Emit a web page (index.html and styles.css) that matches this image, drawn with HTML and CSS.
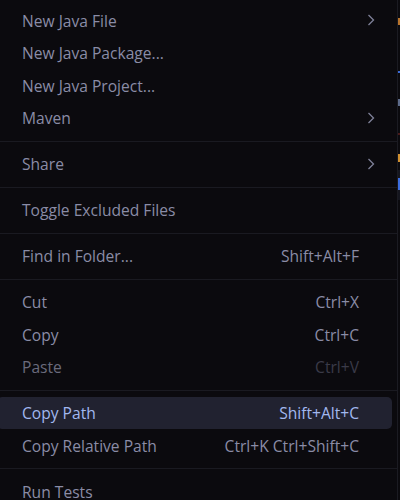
FILE: index.html
```html
<!DOCTYPE html>
<html>
<head>
<meta charset="utf-8">
<link rel="stylesheet" href="styles.css">
</head>
<body>
<div class="screen">
  <div class="menu">
    <div class="item"><span class="label">New Java File</span><svg class="chev" viewBox="0 0 8 12" width="8" height="12"><path d="M1.5 1 L6.5 6 L1.5 11" /></svg></div>
    <div class="item"><span class="label">New Java Package...</span></div>
    <div class="item"><span class="label">New Java Project...</span></div>
    <div class="item"><span class="label">Maven</span><svg class="chev" viewBox="0 0 8 12" width="8" height="12"><path d="M1.5 1 L6.5 6 L1.5 11" /></svg></div>
    <div class="sep"></div>
    <div class="item"><span class="label">Share</span><svg class="chev" viewBox="0 0 8 12" width="8" height="12"><path d="M1.5 1 L6.5 6 L1.5 11" /></svg></div>
    <div class="sep"></div>
    <div class="item"><span class="label">Toggle Excluded Files</span></div>
    <div class="sep"></div>
    <div class="item"><span class="label">Find in Folder...</span><span class="key">Shift+Alt+F</span></div>
    <div class="sep"></div>
    <div class="item"><span class="label">Cut</span><span class="key">Ctrl+X</span></div>
    <div class="item"><span class="label">Copy</span><span class="key">Ctrl+C</span></div>
    <div class="item disabled"><span class="label">Paste</span><span class="key">Ctrl+V</span></div>
    <div class="sep"></div>
    <div class="item active"><span class="label">Copy Path</span><span class="key">Shift+Alt+C</span></div>
    <div class="item"><span class="label">Copy Relative Path</span><span class="key">Ctrl+K Ctrl+Shift+C</span></div>
    <div class="sep"></div>
    <div class="item"><span class="label">Run Tests</span></div>
  </div>
  <div class="editor">
    <span class="mark m1"></span>
    <span class="mark m2"></span>
    <span class="mark m3"></span>
    <span class="mark m4"></span>
    <span class="mark m5"></span>
    <span class="mark m6"></span>
  </div>
</div>
</body>
</html>
```

FILE: styles.css
```css
html, body {
  margin: 0;
  padding: 0;
  background: #0b0a0e;
  overflow: hidden;
}
.screen {
  display: flex;
  width: 400px;
  height: 500px;
  overflow: hidden;
}
.menu {
  flex: 0 0 406px;
  margin-left: -8px;
  padding-top: 4.25px;
  border-right: 1px solid #1b1b22;
  background: #0b0a0e;
  box-sizing: border-box;
  font-family: "Open Sans", "Noto Sans", sans-serif;
  font-size: 15.6px;
  color: #8a8ca6;
}
.item {
  display: flex;
  align-items: center;
  height: 32.5px;
  margin: 0 5px;
  padding: 0 33px 0 25px;
  border-radius: 5px;
  position: relative;
  white-space: nowrap;
}
.label {
  flex: 1;
}
.key {
  color: #8a8ca6;
}
.chev {
  position: absolute;
  right: 17px;
  top: 10px;
  fill: none;
  stroke: #7f8199;
  stroke-width: 1.3;
}
.disabled .label {
  color: #6a6b7c;
}
.disabled .key {
  color: #3a3a48;
}
.active {
  background: #212230;
  color: #a2b8ef;
}
.active .key {
  color: #a2b8ef;
}
.sep {
  height: 1px;
  margin: 6.25px 0;
  background: #1a1a21;
}
.editor {
  flex: 1;
  position: relative;
  background: #0b0a0e;
}
.mark {
  position: absolute;
  left: 0;
  width: 3px;
}
.m1 { top: 18px; height: 7px; background: #b8742c; }
.m2 { top: 71px; height: 2px; background: #3b6ad6; }
.m3 { top: 99px; height: 7px; background: #5d6b8a; }
.m4 { top: 133px; height: 2px; background: #4a1a1a; }
.m5 { top: 154px; height: 8px; background: #d09030; }
.m6 { top: 170px; height: 30px; background: #15161f; }
.m6::after { content: ""; position: absolute; left: 0; top: 8px; width: 3px; height: 12px; background: #3c6ee0; }
```
